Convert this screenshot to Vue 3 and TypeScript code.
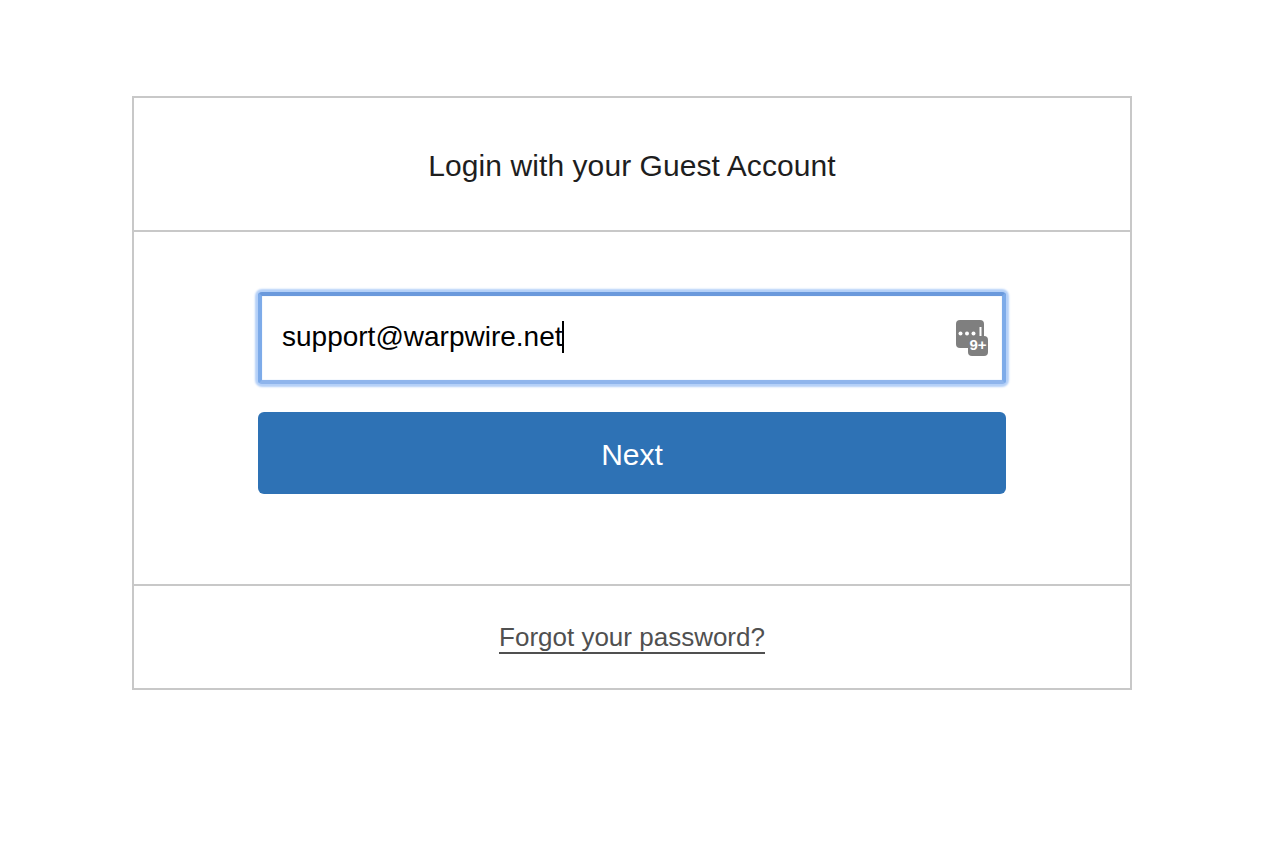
<script setup lang="ts">
const title = 'Login with your Guest Account'
const email = 'support@warpwire.net'
</script>

<template>
  <main class="page">
    <section class="card">
      <header class="head">
        <h1>{{ title }}</h1>
      </header>
      <form class="body" @submit.prevent>
        <div class="field">
          <span class="value">{{ email }}</span><span class="caret"></span>
          <svg class="key" width="32" height="36" viewBox="0 0 32 36">
            <rect x="0" y="0" width="28" height="28" rx="4" fill="#7f7f7f" />
            <circle cx="4.5" cy="13.5" r="2" fill="#fff" />
            <circle cx="11" cy="13.5" r="2" fill="#fff" />
            <circle cx="17.5" cy="13.5" r="2" fill="#fff" />
            <rect x="23.5" y="7" width="2" height="9" fill="#fff" />
            <rect x="12" y="16" width="20" height="20" rx="4" fill="#7f7f7f" />
            <text x="22" y="30" class="key-text" text-anchor="middle">9+</text>
          </svg>
        </div>
        <button class="next" type="submit">Next</button>
      </form>
      <footer class="foot">
        <a class="forgot" href="#">Forgot your password?</a>
      </footer>
    </section>
  </main>
</template>

<style scoped>
.page {
  display: flex;
  justify-content: center;
  padding: 96px 2px 0 0;
  font-family: "Liberation Sans", Arial, sans-serif;
}
.card {
  box-sizing: border-box;
  width: 1000px;
  height: 594px;
  border: 2px solid #c8c8c8;
  display: flex;
  flex-direction: column;
}
.head {
  height: 132px;
  padding-top: 3px;
  box-sizing: border-box;
  display: flex;
  align-items: center;
  justify-content: center;
}
h1 {
  margin: 0;
  font-size: 30px;
  letter-spacing: 0.07px;
  font-weight: 400;
  color: #1e1e1e;
}
.body {
  box-sizing: border-box;
  height: 356px;
  border-top: 2px solid #c8c8c8;
  border-bottom: 2px solid #c8c8c8;
  padding: 60px 124px 0;
  display: flex;
  flex-direction: column;
  gap: 28px;
}
.field {
  position: relative;
  box-sizing: border-box;
  height: 92px;
  background: #fff;
  border: 4px solid #7dabe9;
  border-top-color: #6a99dc;
  border-bottom-color: #8fb5ec;
  border-radius: 4px;
  box-shadow: 0 0 2px 3px #b4d0f8, inset 0 0 1px 0 #9dbdee;
  padding: 0 0 2px 20px;
  display: flex;
  align-items: center;
  font-size: 28px;
  color: #000;
}
.caret {
  display: inline-block;
  width: 2px;
  height: 32px;
  margin: 0 0 0 -1px;
  background: #000;
}
.key {
  position: absolute;
  right: 14px;
  top: 24px;
}
.key-text {
  font: 700 15px "Liberation Sans", Arial, sans-serif;
  fill: #fff;
}
.next {
  height: 82px;
  border: 0;
  border-radius: 6px;
  padding-top: 4px;
  background: #2e72b5;
  color: #fff;
  font-family: inherit;
  font-size: 30px;
}
.foot {
  flex: 1;
  padding-top: 1px;
  display: flex;
  align-items: center;
  justify-content: center;
}
.forgot {
  color: #505050;
  font-size: 26px;
  line-height: 30px;
  text-decoration: none;
  border-bottom: 2px solid #505050;
}
</style>
